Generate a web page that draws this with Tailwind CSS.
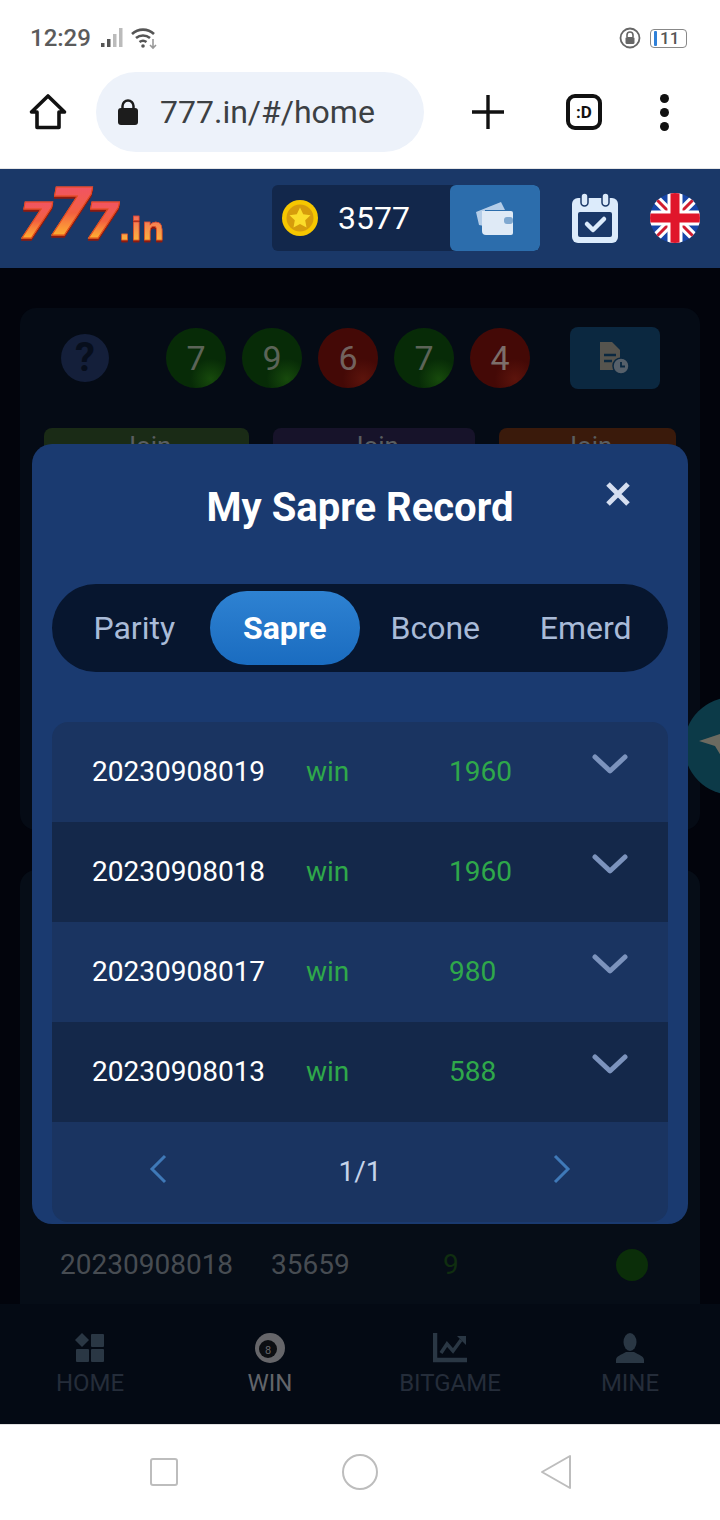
<!DOCTYPE html>
<html lang="en">
<head>
  <meta charset="UTF-8">
  <title>777.in</title>
  <script src="https://cdn.jsdelivr.net/npm/@tailwindcss/browser@4"></script>
</head>
<body class="bg-white font-[Roboto,sans-serif]">
  <div class="relative w-[720px] h-[1520px] overflow-hidden flex flex-col">

    <!-- Status bar -->
    <div class="h-[68px] shrink-0 bg-white flex items-center justify-between pl-[30px] pr-[33px] pt-[8px]">
      <div class="flex items-center text-[#5b5b5b]">
        <span class="text-[24px] font-medium leading-none">12:29</span>
        <svg class="ml-[9px]" width="24" height="22" viewBox="0 0 24 22" fill="#555"><rect x="1" y="16" width="3.500" height="4"/><rect x="7" y="12" width="3.500" height="8"/><rect x="13" y="7" width="3.500" height="13" fill="#bbb"/><rect x="19" y="1" width="3.500" height="19" fill="#bbb"/></svg>
        <svg class="ml-[6px]" width="28" height="24" viewBox="0 0 28 24" fill="none" stroke="#555" stroke-width="2.600"><path d="M2 8a16 16 0 0 1 22 0"/><path d="M6 12a11 11 0 0 1 14 0"/><path d="M9.500 16a6 6 0 0 1 7 0"/><circle cx="13" cy="20" r="1.800" fill="#555" stroke="none"/><path d="M23 13v9M20 19l3 3 3-3" stroke="#999" stroke-width="1.600"/></svg>
      </div>
      <div class="flex items-center gap-[9px]">
        <svg width="22" height="22" viewBox="0 0 22 22" fill="none"><circle cx="11" cy="11" r="9.500" stroke="#666" stroke-width="1.800"/><rect x="6.500" y="10" width="9" height="7" rx="1.500" fill="#666"/><path d="M8 10V8a3 3 0 0 1 6 0v2" stroke="#666" stroke-width="1.600"/></svg>
        <div class="relative w-[37px] h-[19px] rounded-[4px] border border-[#888] flex items-center pl-[3px]">
          <div class="w-[3px] h-[15px] bg-[#2f80d8] rounded-[1px]"></div>
          <span class="ml-[3px] text-[#555] text-[17px] font-medium leading-none">11</span>
        </div>
      </div>
    </div>

    <!-- Browser bar -->
    <div class="h-[101px] shrink-0 bg-white flex items-center border-b border-[#e6e6e6] pb-[12px] pl-[28px]">
      <svg width="40" height="40" viewBox="0 0 40 40" fill="none" stroke="#111" stroke-width="3.600" stroke-linejoin="round"><path d="M3.500 20 20 4l16.500 16H31v15.500H9V20z"/></svg>
      <div class="ml-[28px] w-[328px] h-[80px] rounded-full bg-[#edf2fa] flex items-center pl-[22px]">
        <svg width="20" height="26" viewBox="0 0 20 26" fill="#1c1c1c"><rect x="0" y="9" width="20" height="17" rx="3"/><path d="M4.500 10V7a5.500 5.500 0 0 1 11 0v3" fill="none" stroke="#1c1c1c" stroke-width="2.500"/></svg>
        <span class="ml-[22px] text-[32px] text-[#3c4043] leading-none">777.in/#/home</span>
      </div>
      <svg class="ml-[48px]" width="32" height="34" viewBox="0 0 32 34" stroke="#111" stroke-width="3.400"><path d="M0 17h32M16 0v34"/></svg>
      <div class="ml-[62px] w-[36px] h-[36px] rounded-[9px] border-[4px] border-[#111] flex items-center justify-center text-[17px] font-bold text-[#111] leading-none">:D</div>
      <div class="ml-[58px] flex flex-col gap-[5px]">
        <div class="w-[9px] h-[9px] rounded-full bg-[#111]"></div>
        <div class="w-[9px] h-[9px] rounded-full bg-[#111]"></div>
        <div class="w-[9px] h-[9px] rounded-full bg-[#111]"></div>
      </div>
    </div>

    <!-- App header -->
    <div class="h-[99px] shrink-0 bg-[#1a3868] flex items-center pl-[22px] pb-[2px]">
      <div class="w-[140px] h-[60px] flex items-end font-['DejaVu_Sans',sans-serif] font-bold leading-none drop-shadow-[0_2px_0_#8c1a10]">
        <span class="text-[50px] italic -ml-[4px] -mr-[12px] mb-[2px] bg-gradient-to-b from-[#f0506a] via-[#f3603f] to-[#fdd21c] bg-clip-text text-transparent [-webkit-text-stroke:1px_#e2491c] pr-[6px]">7</span>
        <span class="text-[66px] italic -mr-[14px] mb-[2px] bg-gradient-to-b from-[#f0506a] via-[#f3603f] to-[#fdd21c] bg-clip-text text-transparent [-webkit-text-stroke:1px_#e2491c] pr-[6px]">7</span>
        <span class="text-[50px] italic -mr-[3px] mb-[2px] bg-gradient-to-b from-[#f0506a] via-[#f3603f] to-[#fdd21c] bg-clip-text text-transparent [-webkit-text-stroke:1px_#e2491c] pr-[2px]">7</span>
        <span class="text-[32px] mb-[3px] bg-gradient-to-b from-[#f0605a] to-[#f9c030] bg-clip-text text-transparent [-webkit-text-stroke:0.500px_#d5341c]">.in</span>
      </div>
      <div class="ml-[110px] w-[268px] h-[66px] rounded-[6px] bg-[#12274b] flex items-center overflow-hidden">
        <svg class="ml-[10px]" width="36" height="36" viewBox="0 0 36 36"><circle cx="18" cy="18" r="18" fill="#f6c700"/><circle cx="18" cy="18" r="13.500" fill="#d69c0c"/><path d="m18 7.500 3.200 6.800 7.300 1-5.300 5 1.300 7.300-6.500-3.500-6.500 3.500 1.300-7.300-5.300-5 7.300-1z" fill="#fbdc2a"/></svg>
        <span class="ml-[20px] w-[112px] text-[32px] text-white leading-none">3577</span>
        <div class="w-[90px] h-full bg-[#2c6dac] rounded-[6px] flex items-center justify-center">
          <svg width="40" height="34" viewBox="0 0 40 34"><path d="M1 11 26 1l4 8H10l-1 16-5-1z" fill="#b4cde8"/><path d="M7 10h29a2 2 0 0 1 2 2v20a2 2 0 0 1-2 2H11a4 4 0 0 1-4-4z" fill="#dfeaf6"/><rect x="29" y="16" width="9" height="7" rx="3" fill="#7fa8d0"/></svg>
        </div>
      </div>
      <svg class="ml-[32px]" width="46" height="50" viewBox="0 0 46 50"><rect x="0" y="5" width="46" height="45" rx="6" fill="#dcebfb"/><rect x="6" y="19" width="34" height="25" rx="2" fill="#1a3868"/><rect x="9" y="0" width="7" height="13" rx="3.500" fill="#dcebfb" stroke="#1a3868" stroke-width="1.500"/><rect x="30" y="0" width="7" height="13" rx="3.500" fill="#dcebfb" stroke="#1a3868" stroke-width="1.500"/><path d="m15 31 6 6 11-11" fill="none" stroke="#dcebfb" stroke-width="4.500" stroke-linecap="round" stroke-linejoin="round"/></svg>
      <svg class="ml-[32px]" width="50" height="50" viewBox="0 0 50 50">
        <defs><clipPath id="flag"><circle cx="25" cy="25" r="25"/></clipPath></defs>
        <g clip-path="url(#flag)">
          <rect width="50" height="50" fill="#1746a8"/>
          <path d="M0 0 50 50M50 0 0 50" stroke="#fff" stroke-width="9"/>
          <path d="M0 0 50 50M50 0 0 50" stroke="#d01c30" stroke-width="3"/>
          <path d="M25 0v50M0 25h50" stroke="#fff" stroke-width="15"/>
          <path d="M25 0v50M0 25h50" stroke="#e0162b" stroke-width="9"/>
        </g>
      </svg>
    </div>

    <!-- Dimmed game page -->
    <div class="flex-1 min-h-0 bg-[#02040c] px-[20px] pt-[40px] flex flex-col gap-[40px] overflow-hidden">
      <div class="h-[522px] shrink-0 rounded-[16px] bg-[#050b15] pt-[19px]">
        <div class="flex items-center">
          <div class="ml-[41px] w-[48px] h-[48px] rounded-full bg-[#141f3a] flex items-center justify-center text-[40px] font-bold text-[#070e1c] leading-none">?</div>
          <div class="ml-[57px] flex gap-[16px]">
            <div class="w-[60px] h-[60px] rounded-full bg-[radial-gradient(circle_at_75%_85%,#174a0c,#072b07_30%)] flex items-center justify-center text-[34px] text-[#5c6458] leading-none">7</div>
            <div class="w-[60px] h-[60px] rounded-full bg-[radial-gradient(circle_at_75%_85%,#174a0c,#072b07_30%)] flex items-center justify-center text-[34px] text-[#5c6458] leading-none">9</div>
            <div class="w-[60px] h-[60px] rounded-full bg-[radial-gradient(circle_at_75%_85%,#5c140c,#440906_30%)] flex items-center justify-center text-[34px] text-[#72625e] leading-none">6</div>
            <div class="w-[60px] h-[60px] rounded-full bg-[radial-gradient(circle_at_75%_85%,#174a0c,#072b07_30%)] flex items-center justify-center text-[34px] text-[#5c6458] leading-none">7</div>
            <div class="w-[60px] h-[60px] rounded-full bg-[radial-gradient(circle_at_75%_85%,#5c140c,#440906_30%)] flex items-center justify-center text-[34px] text-[#7c6e6a] leading-none">4</div>
          </div>
          <div class="ml-[40px] w-[90px] h-[62px] rounded-[8px] bg-[#0b2840] flex items-center justify-center">
            <svg width="30" height="34" viewBox="0 0 30 34"><path d="M0 1h12l8 8v20H0z" fill="#56544e"/><path d="M4 14h12M4 20h8" stroke="#0b2840" stroke-width="2.500"/><circle cx="21" cy="25" r="8" fill="#56606a" stroke="#0b2840" stroke-width="1.500"/><path d="M21 21v4.500h4" fill="none" stroke="#0b2840" stroke-width="1.800"/></svg>
          </div>
        </div>
        <div class="mt-[39px] ml-[24px] flex gap-[24px] text-[26px] leading-[36px] text-center text-[#5a5e60]">
          <div class="w-[205px] h-[40px] rounded-[8px] bg-[#1a2b16]">Join</div>
          <div class="w-[202px] h-[40px] rounded-[8px] bg-[#17132a]">Join</div>
          <div class="w-[177px] h-[40px] rounded-[8px] bg-[#3a1a0b]">Join</div>
        </div>
      </div>
      <div class="h-[500px] shrink-0 rounded-t-[16px] bg-[#060d17] pt-[290px] pl-[40px] flex items-center text-[28px] text-[#474c52] leading-none">
        <span class="w-[211px]">20230908018</span>
        <span class="w-[172px]">35659</span>
        <span class="w-[173px] text-[#102e10]">9</span>
        <span class="w-[32px] h-[32px] rounded-full bg-[#0b2e09]"></span>
      </div>
    </div>

    <!-- Dimmed tab bar -->
    <div class="h-[120px] shrink-0 bg-[#040a14] grid grid-cols-4 pt-[29px] text-[24px] leading-none text-center text-[#252d3a]">
      <div class="flex flex-col items-center">
        <svg width="30" height="30" viewBox="0 0 30 30" fill="#2a3744"><path d="M7 0 14 7 7 14 0 7z"/><rect x="16" y="1" width="13" height="13" rx="1"/><rect x="1" y="16" width="13" height="13" rx="1"/><rect x="16" y="16" width="13" height="13" rx="1"/></svg>
        <span class="mt-[8px]">HOME</span>
      </div>
      <div class="flex flex-col items-center text-[#62656a]">
        <svg width="30" height="30" viewBox="0 0 30 30"><circle cx="15" cy="15" r="15" fill="#66666a"/><circle cx="13" cy="16" r="9" fill="#0c0e12"/><text x="13" y="20.500" text-anchor="middle" font-size="11" fill="#66666a">8</text></svg>
        <span class="mt-[8px]">WIN</span>
      </div>
      <div class="flex flex-col items-center">
        <svg width="34" height="30" viewBox="0 0 34 30" fill="none" stroke="#2a3744"><path d="M2 0v27h32" stroke-width="4.500"/><path d="M8 20 14 11l6 7 8-11" stroke-width="3.500"/><path d="M24 3h9v9z" fill="#2a3744" stroke="none"/></svg>
        <span class="mt-[8px]">BITGAME</span>
      </div>
      <div class="flex flex-col items-center">
        <svg width="30" height="30" viewBox="0 0 30 30" fill="#2a3744"><ellipse cx="15" cy="9" rx="6.500" ry="9"/><path d="M1 30v-3c0-4 5-5 10-8h8c5 3 10 4 10 8v3z"/></svg>
        <span class="mt-[8px]">MINE</span>
      </div>
    </div>

    <!-- Android navigation -->
    <div class="h-[96px] shrink-0 bg-white border-t border-[#e2e2e2] flex items-center pb-[2px] pl-[150px]">
      <div class="w-[28px] h-[28px] rounded-[3px] border-2 border-[#bdbdbd]"></div>
      <div class="ml-[164px] w-[36px] h-[36px] rounded-full border-2 border-[#bdbdbd]"></div>
      <svg class="ml-[162px]" width="32" height="36" viewBox="0 0 32 36" fill="none" stroke="#bdbdbd" stroke-width="2" stroke-linejoin="round"><path d="M30 2v32L2 18z"/></svg>
    </div>

    <!-- Floating button behind modal -->
    <div class="absolute left-[684px] top-[697px] w-[98px] h-[98px] rounded-full bg-[#0c3a48] flex items-center pl-[15px]">
      <svg width="24" height="26" viewBox="0 0 24 26" fill="#6c6a60"><path d="M0 8 24 0v26l-8-13z"/></svg>
    </div>

    <!-- Record modal -->
    <div class="absolute left-[32px] top-[444px] w-[656px] h-[780px] rounded-[20px] bg-[#1a3a70] px-[20px] flex flex-col">
      <div class="relative h-[140px] shrink-0">
        <h2 class="pt-[41px] text-center text-[40px] leading-[46px] font-bold text-white">My Sapre Record</h2>
        <svg class="absolute right-[38px] top-[38px]" width="24" height="24" viewBox="0 0 24 24" stroke="#d5def0" stroke-width="5"><path d="M2 2l20 20M22 2 2 22"/></svg>
      </div>
      <div class="h-[88px] shrink-0 rounded-full bg-[#07162f] grid grid-cols-4 items-center px-[7px] text-[32px] text-center text-[#a9bbd8] leading-none">
        <span>Parity</span>
        <span class="h-[74px] rounded-full bg-gradient-to-b from-[#2e82d2] to-[#1a6cc0] text-white font-bold flex items-center justify-center">Sapre</span>
        <span>Bcone</span>
        <span>Emerd</span>
      </div>
      <div class="mt-[50px] rounded-[16px] overflow-hidden text-[28px] leading-none">
        <div class="h-[100px] bg-[#1a3461] flex items-center pl-[40px] text-[#2fa84a]">
          <span class="w-[214px] text-white">20230908019</span>
          <span class="w-[143px]">win</span>
          <span class="w-[143px]">1960</span>
          <svg class="mb-[14px]" width="36" height="22" viewBox="0 0 36 22" fill="none" stroke="#7c93bd" stroke-width="5" stroke-linecap="round" stroke-linejoin="round"><path d="m3 3 15 14L33 3"/></svg>
        </div>
        <div class="h-[100px] bg-[#14284a] flex items-center pl-[40px] text-[#2fa84a]">
          <span class="w-[214px] text-white">20230908018</span>
          <span class="w-[143px]">win</span>
          <span class="w-[143px]">1960</span>
          <svg class="mb-[14px]" width="36" height="22" viewBox="0 0 36 22" fill="none" stroke="#7c93bd" stroke-width="5" stroke-linecap="round" stroke-linejoin="round"><path d="m3 3 15 14L33 3"/></svg>
        </div>
        <div class="h-[100px] bg-[#1a3461] flex items-center pl-[40px] text-[#2fa84a]">
          <span class="w-[214px] text-white">20230908017</span>
          <span class="w-[143px]">win</span>
          <span class="w-[143px]">980</span>
          <svg class="mb-[14px]" width="36" height="22" viewBox="0 0 36 22" fill="none" stroke="#7c93bd" stroke-width="5" stroke-linecap="round" stroke-linejoin="round"><path d="m3 3 15 14L33 3"/></svg>
        </div>
        <div class="h-[100px] bg-[#14284a] flex items-center pl-[40px] text-[#2fa84a]">
          <span class="w-[214px] text-white">20230908013</span>
          <span class="w-[143px]">win</span>
          <span class="w-[143px]">588</span>
          <svg class="mb-[14px]" width="36" height="22" viewBox="0 0 36 22" fill="none" stroke="#7c93bd" stroke-width="5" stroke-linecap="round" stroke-linejoin="round"><path d="m3 3 15 14L33 3"/></svg>
        </div>
        <div class="h-[100px] bg-[#1a3461] flex items-center justify-between pl-[97px] pr-[97px] text-[#c5d3ea]">
          <svg class="mb-[6px]" width="18" height="30" viewBox="0 0 18 30" fill="none" stroke="#3f79b8" stroke-width="3"><path d="M16 2 3 15l13 13"/></svg>
          <span>1/1</span>
          <svg class="mb-[6px]" width="18" height="30" viewBox="0 0 18 30" fill="none" stroke="#3f79b8" stroke-width="3"><path d="m2 2 13 13L2 28"/></svg>
        </div>
      </div>
    </div>
  </div>
</body>
</html>
